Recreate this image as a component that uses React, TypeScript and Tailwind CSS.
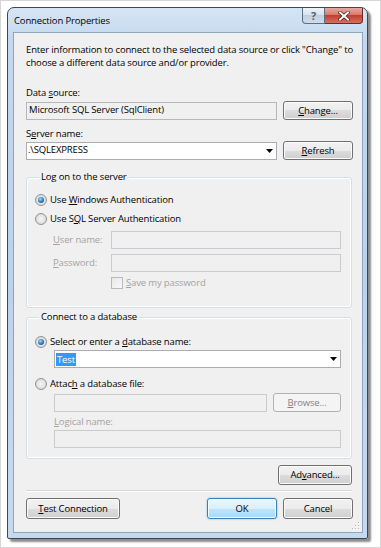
import React from "react";

type Kids = { children?: React.ReactNode };

function U({ children }: Kids) {
  return <span className="underline underline-offset-[1px] decoration-[1px]">{children}</span>;
}

function Button({ children, className = "", disabled, primary }: Kids & { className?: string; disabled?: boolean; primary?: boolean }) {
  const look = disabled
    ? "border-[#adb2b5] bg-[#f4f4f4] text-[#838383]"
    : primary
    ? "border-[#3c7fb1] bg-[linear-gradient(#eaf6fd_0%,#d9f0fc_50%,#bee6fd_50%,#a7d9f5_100%)] shadow-[inset_0_0_0_1px_#f4fbff,0_0_2px_#6fb8ea] text-black"
    : "border-[#707070] bg-[linear-gradient(#f2f2f2_0%,#ebebeb_50%,#dddddd_50%,#cfcfcf_100%)] shadow-[inset_0_0_0_1px_#fbfbfb] text-black";
  return (
    <div className={`shrink-0 rounded-[3px] border flex items-center justify-center leading-none ${look} ${className}`}>
      {children}
    </div>
  );
}

function TextBox({ children, className = "", disabled, white }: Kids & { className?: string; disabled?: boolean; white?: boolean }) {
  const look = white
    ? "bg-white border-[#abadb3] border-t-[#abadb3]"
    : disabled
    ? "bg-[#f0f0f0] border-[#c9cbcf]"
    : "bg-[#f0f0f0] border-[#b5b7bb]";
  return <div className={`h-[18px] border flex items-center ${look} ${className}`}>{children}</div>;
}

function Radio({ checked }: { checked?: boolean }) {
  return (
    <span className="w-[12px] h-[12px] shrink-0 rounded-full border border-[#8f9396] bg-[radial-gradient(circle_at_50%_50%,#f6f6f6_0%,#e2e2e2_55%,#cfcfcf_100%)] flex items-center justify-center">
      {checked && (
        <span className="w-[6px] h-[6px] rounded-full bg-[radial-gradient(circle_at_40%_35%,#9fdcff_0%,#2479c5_55%,#0c3a6e_100%)]" />
      )}
    </span>
  );
}

function ArrowDown() {
  return (
    <svg width="7" height="4" viewBox="0 0 7 4" className="shrink-0">
      <path d="M0 0h7L3.5 4z" fill="#000" />
    </svg>
  );
}

function GroupBox({ title, className = "", children }: Kids & { title: string; className?: string }) {
  return (
    <div className={`border border-[#d5dfe5] rounded-[3px] shadow-[inset_0_0_0_1px_#ffffff] ${className}`}>
      <div className="-mt-[8px] ml-[4px] px-[2px] w-fit bg-[#f0f0f0] leading-[13px]">{title}</div>
      {children}
    </div>
  );
}

export default function App() {
  return (
    <div className="w-[381px] h-[548px] bg-white border border-[#d6d6d6] pt-[6px] pl-[6px] font-['Open_Sans',sans-serif] text-[9.5px] tracking-[-0.15px] text-black">
      {/* window frame */}
      <div className="w-[361px] h-[532px] border border-[#3d4651] rounded-t-[7px] rounded-b-[2px] bg-[linear-gradient(180deg,#d6e5f5_0%,#c3d8ee_6%,#bcd2ea_50%,#c6daef_100%)] shadow-[3px_3px_2px_rgba(0,0,0,0.45)] flex flex-col pl-[5px] pr-[4px] pb-[5px]">
        {/* title bar */}
        <div className="h-[24px] flex items-start shrink-0">
          <span className="ml-[1px] mt-[6px] leading-[13px]">Connection Properties</span>
          <div className="ml-auto flex">
            <div className="w-[23px] h-[16px] rounded-bl-[4px] border border-[#5c6f84] border-t-0 bg-[linear-gradient(#eef3f8_0%,#d9e3ed_45%,#c0cfdf_50%,#d0dce8_100%)] flex items-center justify-center text-[11px] font-bold text-[#55616d] leading-none">
              ?
            </div>
            <div className="w-[38px] h-[16px] rounded-br-[4px] border border-[#6a2b25] border-t-0 border-l-0 bg-[linear-gradient(#e7aa9f_0%,#d87a6c_45%,#c23f30_50%,#d5705f_100%)] flex items-center justify-center">
              <svg width="12" height="10" viewBox="0 0 12 10">
                <path d="M2 1.5l8 7M10 1.5l-8 7" stroke="#4a1a15" strokeWidth="3.4" strokeLinecap="square" />
                <path d="M2 1.5l8 7M10 1.5l-8 7" stroke="#ffffff" strokeWidth="2" strokeLinecap="square" />
              </svg>
            </div>
          </div>
        </div>

        {/* client area */}
        <div className="flex-1 border border-[#8da5bf] bg-[#f0f0f0] relative flex flex-col pl-[12px] pr-[9px] pt-[10px]">
          <p className="leading-[13px] whitespace-nowrap">
            Enter information to connect to the selected data source or click "Change" to
            <br />
            choose a different data source and/or provider.
          </p>

          <div className="mt-[17px] leading-[13px]">
            Data <U>s</U>ource:
          </div>
          <div className="mt-[2px] flex items-center gap-[6px] h-[19px]">
            <TextBox className="w-[252px] h-[17px] pl-[2px]">Microsoft SQL Server (SqlClient)</TextBox>
            <Button className="w-[70px] h-[19px]">
              <U>C</U>hange...
            </Button>
          </div>

          <div className="mt-[7px] leading-[13px]">
            S<U>e</U>rver name:
          </div>
          <div className="mt-[1px] flex items-center gap-[6px] h-[19px]">
            <TextBox white className="w-[252px] h-[17px] pl-[1px] pr-[3px]">
              <span>.\SQLEXPRESS</span>
              <span className="ml-auto">
                <ArrowDown />
              </span>
            </TextBox>
            <Button className="w-[70px] h-[19px]">
              <U>R</U>efresh
            </Button>
          </div>

          <GroupBox title="Log on to the server" className="mt-[17px] w-[326px] pl-[8px] pr-[10px] pb-[17px]">
            <div className="mt-[9px] h-[16px] flex items-center gap-[3px]">
              <Radio checked />
              <span>
                Use <U>W</U>indows Authentication
              </span>
            </div>
            <div className="mt-[3px] h-[16px] flex items-center gap-[3px]">
              <Radio />
              <span>
                Use S<U>Q</U>L Server Authentication
              </span>
            </div>
            <div className="mt-[4px] flex items-center text-[#a3a3a3]">
              <span className="w-[76px] pl-[18px]">
                <U>U</U>ser name:
              </span>
              <TextBox disabled className="w-[230px]" />
            </div>
            <div className="mt-[5px] flex items-center text-[#a3a3a3]">
              <span className="w-[76px] pl-[18px]">
                <U>P</U>assword:
              </span>
              <TextBox disabled className="w-[230px]" />
            </div>
            <div className="mt-[4px] h-[14px] flex items-center gap-[3px] pl-[76px] text-[#a3a3a3]">
              <span className="w-[12px] h-[12px] border border-[#b8bbbe] bg-[linear-gradient(135deg,#e8e8e8,#f8f8f8)]" />
              <span>
                <U>S</U>ave my password
              </span>
            </div>
          </GroupBox>

          <GroupBox title="Connect to a database" className="mt-[9px] w-[326px] pl-[8px] pr-[10px] pb-[10px]">
            <div className="mt-[11px] h-[16px] flex items-center gap-[3px]">
              <Radio checked />
              <span>
                Select or enter a <U>d</U>atabase name:
              </span>
            </div>
            <TextBox white className="ml-[19px] w-[287px] pl-[1px] pr-[3px]">
              <span className="bg-[#3399ff] text-white px-[1px] leading-[13px]">Test</span>
              <span className="ml-auto">
                <ArrowDown />
              </span>
            </TextBox>
            <div className="mt-[8px] h-[16px] flex items-center gap-[3px]">
              <Radio />
              <span>
                Attac<U>h</U> a database file:
              </span>
            </div>
            <div className="mt-[1px] ml-[19px] flex items-center gap-[6px]">
              <TextBox disabled className="w-[213px]" />
              <Button disabled className="w-[68px] h-[19px]">
                <U>B</U>rowse...
              </Button>
            </div>
            <div className="mt-[3px] ml-[19px] leading-[13px] text-[#a3a3a3]">
              <U>L</U>ogical name:
            </div>
            <TextBox disabled className="mt-[2px] ml-[19px] w-[287px]" />
          </GroupBox>

          <div className="mt-[6px] flex justify-end pr-[1px]">
            <Button className="w-[74px] h-[20px]">
              Ad<U>v</U>anced...
            </Button>
          </div>

          <div className="mt-[5px] w-[326px] h-[2px] border-t border-[#d5d5d5] border-b border-b-white" />

          <div className="mt-[6px] flex items-center">
            <Button className="w-[94px] h-[21px]">
              <U>T</U>est Connection
            </Button>
            <Button primary className="ml-auto w-[70px] h-[21px]">
              OK
            </Button>
            <Button className="ml-[6px] w-[70px] h-[21px]">Cancel</Button>
          </div>

          {/* size grip */}
          <svg width="10" height="10" viewBox="0 0 10 10" className="absolute right-[1px] bottom-[1px]">
            {[
              [8, 8],
              [5, 8],
              [2, 8],
              [8, 5],
              [5, 5],
              [8, 2],
            ].map(([x, y], i) => (
              <g key={i}>
                <rect x={x} y={y} width="1" height="1" fill="#ffffff" />
                <rect x={x - 1} y={y - 1} width="1" height="1" fill="#b8b8b8" />
              </g>
            ))}
          </svg>
        </div>
      </div>
    </div>
  );
}
